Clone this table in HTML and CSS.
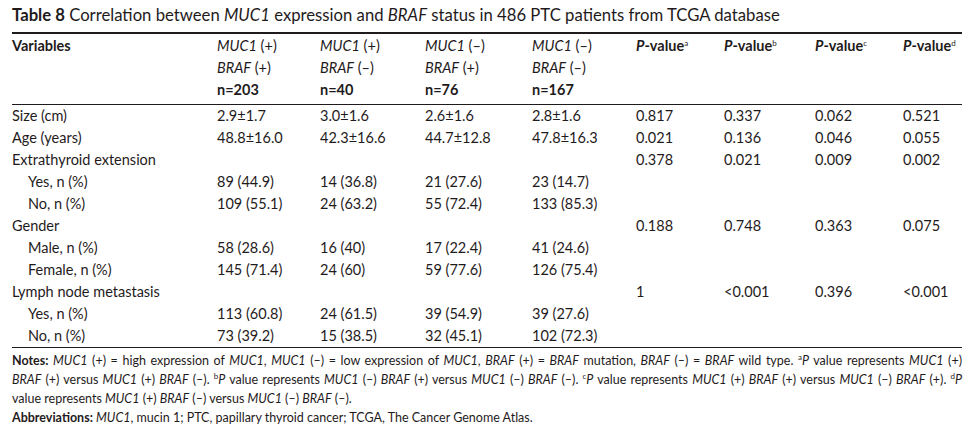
FILE: index.html
```html
<!DOCTYPE html>
<html>
<head>
<meta charset="utf-8">
<link rel="stylesheet" href="styles.css">
</head>
<body>
<div class="page">
  <div class="title"><b>Table 8</b> Correlation between <i>MUC1</i> expression and <i>BRAF</i> status in 486 PTC patients from TCGA database</div>
  <table class="data">
    <colgroup>
      <col class="c0"><col class="c1"><col class="c2"><col class="c3"><col class="c4"><col class="c5"><col class="c6"><col class="c7"><col class="c8">
    </colgroup>
    <thead>
      <tr>
        <th class="var">Variables</th>
        <th class="grp"><i>MUC1</i> (+)<br><i>BRAF</i> (+)<br><b>n=203</b></th>
        <th class="grp"><i>MUC1</i> (+)<br><i>BRAF</i> (–)<br><b>n=40</b></th>
        <th class="grp"><i>MUC1</i> (–)<br><i>BRAF</i> (+)<br><b>n=76</b></th>
        <th class="grp"><i>MUC1</i> (–)<br><i>BRAF</i> (–)<br><b>n=167</b></th>
        <th class="pv"><i>P</i>-value<sup>a</sup></th>
        <th class="pv"><i>P</i>-value<sup>b</sup></th>
        <th class="pv"><i>P</i>-value<sup>c</sup></th>
        <th class="pv"><i>P</i>-value<sup>d</sup></th>
      </tr>
    </thead>
    <tbody>
      <tr><td>Size (cm)</td><td>2.9±1.7</td><td>3.0±1.6</td><td>2.6±1.6</td><td>2.8±1.6</td><td>0.817</td><td>0.337</td><td>0.062</td><td>0.521</td></tr>
      <tr><td>Age (years)</td><td>48.8±16.0</td><td>42.3±16.6</td><td>44.7±12.8</td><td>47.8±16.3</td><td>0.021</td><td>0.136</td><td>0.046</td><td>0.055</td></tr>
      <tr><td>Extrathyroid extension</td><td></td><td></td><td></td><td></td><td>0.378</td><td>0.021</td><td>0.009</td><td>0.002</td></tr>
      <tr><td class="sub">Yes, n (%)</td><td>89 (44.9)</td><td>14 (36.8)</td><td>21 (27.6)</td><td>23 (14.7)</td><td></td><td></td><td></td><td></td></tr>
      <tr><td class="sub">No, n (%)</td><td>109 (55.1)</td><td>24 (63.2)</td><td>55 (72.4)</td><td>133 (85.3)</td><td></td><td></td><td></td><td></td></tr>
      <tr><td>Gender</td><td></td><td></td><td></td><td></td><td>0.188</td><td>0.748</td><td>0.363</td><td>0.075</td></tr>
      <tr><td class="sub">Male, n (%)</td><td>58 (28.6)</td><td>16 (40)</td><td>17 (22.4)</td><td>41 (24.6)</td><td></td><td></td><td></td><td></td></tr>
      <tr><td class="sub">Female, n (%)</td><td>145 (71.4)</td><td>24 (60)</td><td>59 (77.6)</td><td>126 (75.4)</td><td></td><td></td><td></td><td></td></tr>
      <tr><td>Lymph node metastasis</td><td></td><td></td><td></td><td></td><td>1</td><td>&lt;0.001</td><td>0.396</td><td>&lt;0.001</td></tr>
      <tr><td class="sub">Yes, n (%)</td><td>113 (60.8)</td><td>24 (61.5)</td><td>39 (54.9)</td><td>39 (27.6)</td><td></td><td></td><td></td><td></td></tr>
      <tr class="last"><td class="sub">No, n (%)</td><td>73 (39.2)</td><td>15 (38.5)</td><td>32 (45.1)</td><td>102 (72.3)</td><td></td><td></td><td></td><td></td></tr>
    </tbody>
  </table>
  <div class="notes">
    <span class="line full"><b>Notes:</b> <i>MUC1</i> (+) = high expression of <i>MUC1</i>, <i>MUC1</i> (–) = low expression of <i>MUC1</i>, <i>BRAF</i> (+) = <i>BRAF</i> mutation, <i>BRAF</i> (–) = <i>BRAF</i> wild type. <sup>a</sup><i>P</i> value represents <i>MUC1</i> (+)</span>
    <span class="line full"><i>BRAF</i> (+) versus <i>MUC1</i> (+) <i>BRAF</i> (–). <sup>b</sup><i>P</i> value represents <i>MUC1</i> (–) <i>BRAF</i> (+) versus <i>MUC1</i> (–) <i>BRAF</i> (–). <sup>c</sup><i>P</i> value represents <i>MUC1</i> (+) <i>BRAF</i> (+) versus <i>MUC1</i> (–) <i>BRAF</i> (+). <sup>d</sup><i>P</i></span>
    <span class="line">value represents <i>MUC1</i> (+) <i>BRAF</i> (–) versus <i>MUC1</i> (–) <i>BRAF</i> (–).</span>
    <span class="line"><b>Abbreviations:</b> <i>MUC1</i>, mucin 1; PTC, papillary thyroid cancer; TCGA, The Cancer Genome Atlas.</span>
  </div>
</div>
</body>
</html>
```

FILE: styles.css
```css
html, body {
  margin: 0;
  padding: 0;
  background: #ffffff;
}

.page {
  width: 950px;
  padding: 5px 8px 0 12px;
  font-family: Lato, "Open Sans", sans-serif;
  color: #1f1b1c;
}

.title {
  font-size: 16.7px;
  line-height: 20px;
  margin-bottom: 7px;
  white-space: nowrap;
}

.data {
  width: 950px;
  table-layout: fixed;
  border-collapse: collapse;
  border-top: 2px solid #1f1b1c;
  font-size: 14.5px;
}

.c0 { width: 205px; }
.c1 { width: 103px; }
.c2 { width: 105px; }
.c3 { width: 107px; }
.c4 { width: 104px; }
.c5 { width: 88px; }
.c6 { width: 91px; }
.c7 { width: 88px; }
.c8 { width: 59px; }

.data th,
.data td {
  padding: 0;
  text-align: left;
  vertical-align: top;
  line-height: 22px;
  white-space: nowrap;
}

.data th {
  font-weight: normal;
  padding-top: 1px;
  padding-bottom: 3px;
  border-bottom: 1px solid #1f1b1c;
}

.data th.var,
.data th.pv {
  font-weight: bold;
}

.data th b {
  font-weight: bold;
}

.data sup {
  font-size: 8px;
  line-height: 0;
  vertical-align: 5px;
  font-weight: normal;
}

.data td.sub {
  padding-left: 16px;
}

.data tr.last td {
  border-bottom: 1px solid #1f1b1c;
}

.notes {
  font-size: 12.5px;
  line-height: 19px;
  padding-top: 3px;
}

.notes .line {
  display: block;
  white-space: nowrap;
}

.notes .line.full {
  white-space: normal;
  text-align: justify;
  text-align-last: justify;
}

.notes sup {
  font-size: 8px;
  line-height: 0;
  vertical-align: 5px;
}
```
